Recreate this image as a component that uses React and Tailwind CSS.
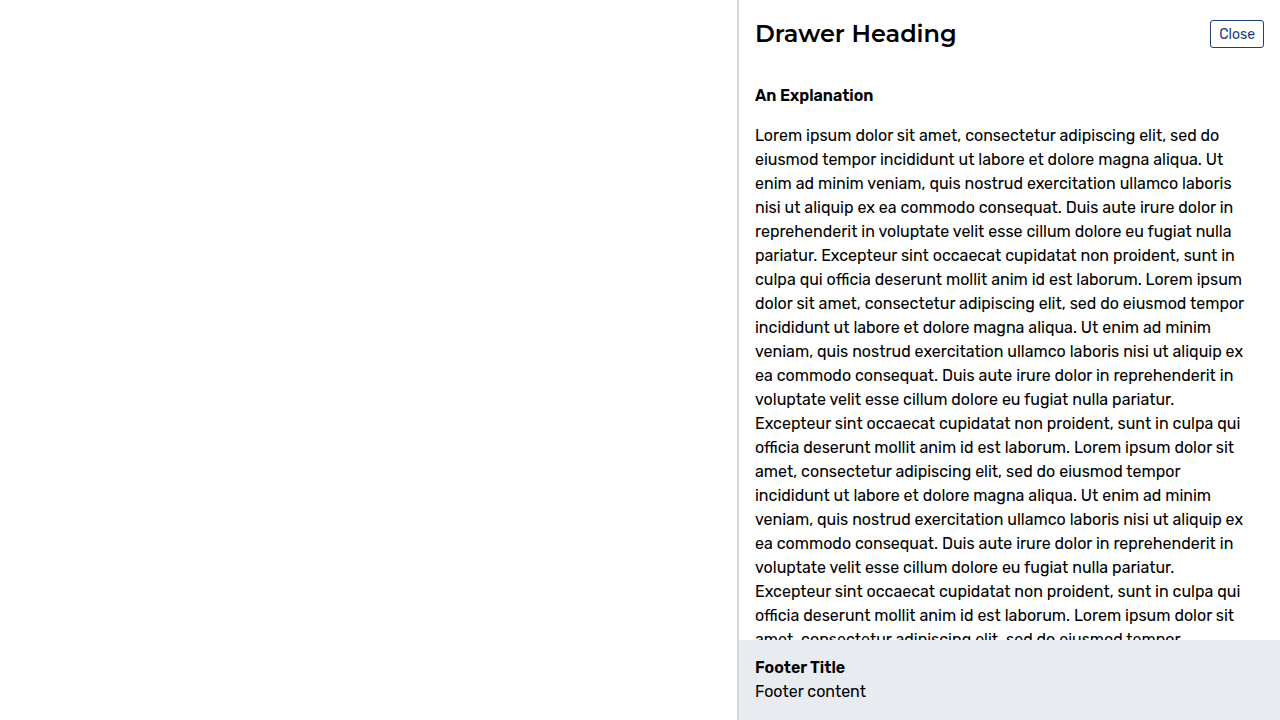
const lorem =
  "Lorem ipsum dolor sit amet, consectetur adipiscing elit, sed do eiusmod tempor incididunt ut labore et dolore magna aliqua. Ut enim ad minim veniam, quis nostrud exercitation ullamco laboris nisi ut aliquip ex ea commodo consequat. Duis aute irure dolor in reprehenderit in voluptate velit esse cillum dolore eu fugiat nulla pariatur. Excepteur sint occaecat cupidatat non proident, sunt in culpa qui officia deserunt mollit anim id est laborum.";

const body = Array(4).fill(lorem).join(" ");

export default function App() {
  return (
    <div className="flex h-screen justify-end overflow-hidden bg-white font-['Rubik','Roboto',sans-serif] text-base text-black">
      <aside
        aria-labelledby="drawer-heading"
        className="flex h-full w-[543px] max-w-full flex-col border-l-2 border-[#d8d8d8] bg-white"
      >
        <header className="flex shrink-0 items-center justify-between p-4">
          <h1 id="drawer-heading" className="font-['Montserrat','Inter',sans-serif] text-2xl leading-9 font-semibold">
            Drawer Heading
          </h1>
          <button
            type="button"
            className="h-7 rounded-[3px] border border-[#1c3f7c] bg-white px-2 pt-0.5 text-sm leading-5 text-[#1c3f7c]"
          >
            Close
          </button>
        </header>
        <main className="min-h-0 flex-1 overflow-y-auto pt-4 pr-7 pl-4 [scrollbar-width:none]">
          <h2 className="mb-4 font-semibold">An Explanation</h2>
          <p>{body}</p>
        </main>
        <footer className="shrink-0 bg-[#e8ebf0] p-4">
          <h2 className="font-semibold">Footer Title</h2>
          <p>Footer content</p>
        </footer>
      </aside>
    </div>
  );
}
